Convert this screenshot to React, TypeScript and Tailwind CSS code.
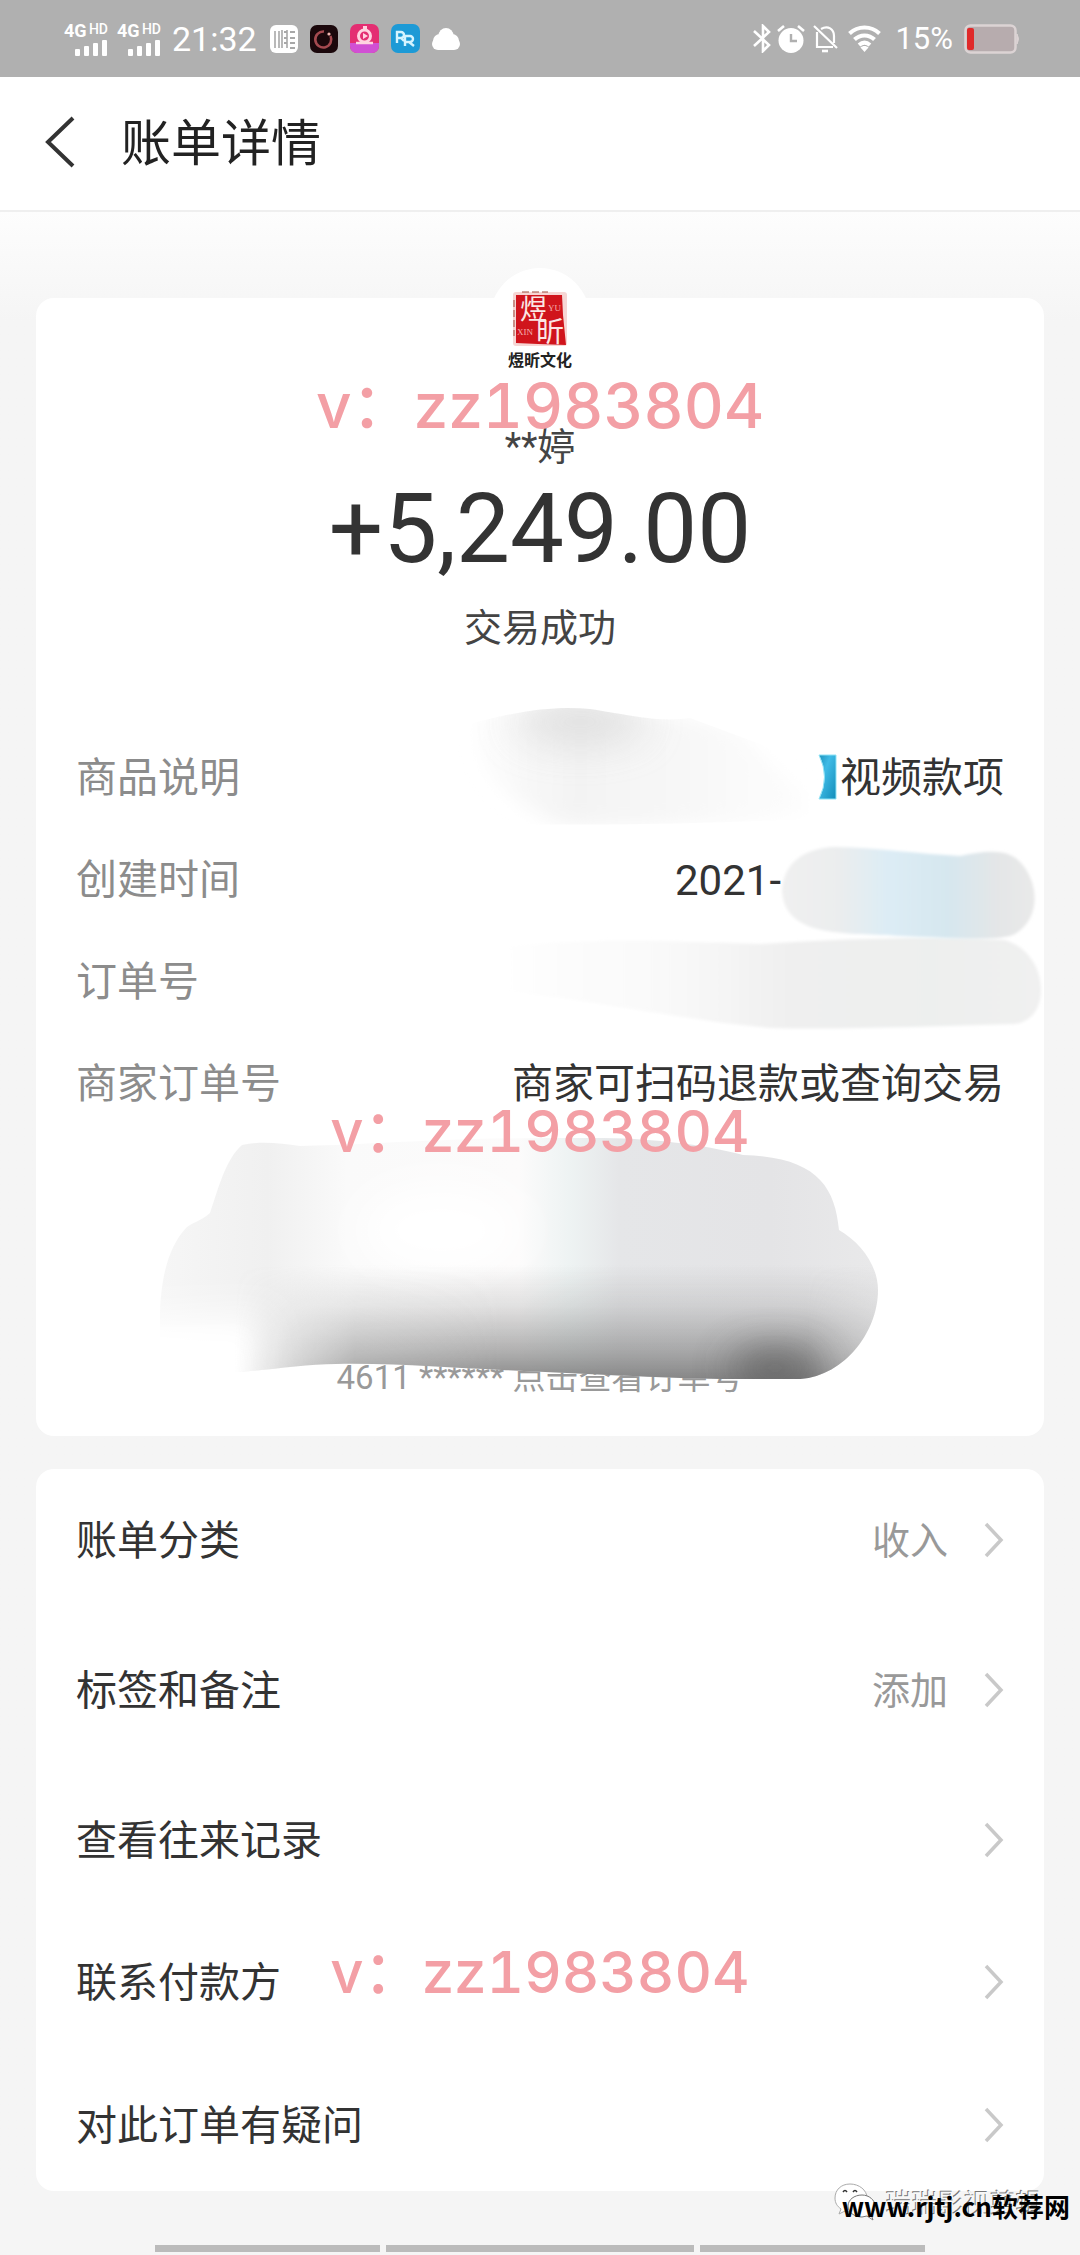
import React from 'react';

const FONT = "font-['Roboto','Noto_Sans_CJK_SC',sans-serif]";
const CJK = "font-['Noto_Sans_CJK_SC',sans-serif]";

function Signal() {
  return (
    <div className="flex h-[34px] w-[44px] flex-col items-end">
      <div className="flex w-full items-start justify-between">
        <span className="text-[18px] font-bold leading-[18px]">4G</span>
        <span className="text-[14px] font-medium leading-[14px]">HD</span>
      </div>
      <svg className="h-[16px] w-[33px]" viewBox="0 0 33 16" fill="currentColor" aria-hidden="true">
        <rect x="0" y="9" width="5" height="7" rx="1" />
        <rect x="9" y="6" width="5" height="10" rx="1" />
        <rect x="18" y="3" width="5" height="13" rx="1" />
        <rect x="27" y="0" width="5" height="16" rx="1" />
      </svg>
    </div>
  );
}

function StatusBar() {
  return (
    <div className="flex h-[77px] items-center justify-between bg-[#b0b0b0] pl-[64px] pr-[60px] text-white">
      <div className="flex items-center">
        <Signal />
        <div className="w-[9px]" />
        <Signal />
        <span className="ml-[11px] text-[34px] leading-[40px]">21:32</span>
        <div className="ml-[13px] flex items-center gap-[12px]">
          <svg className="size-[28px]" viewBox="0 0 28 28" aria-hidden="true">
            <rect width="28" height="28" rx="6" fill="#fff" />
            <path d="M5 6v17M9 6v17M12 5v18M17 5v18" stroke="#a8a8a8" strokeWidth="1.6" />
            <path d="M14 7h3M14 13h3M14 18h3M20 7h5M20 13h5M20 18h5M20 23h5" stroke="#a8a8a8" strokeWidth="1.8" />
          </svg>
          <svg className="size-[28px]" viewBox="0 0 28 28" aria-hidden="true">
            <rect width="28" height="28" rx="7" fill="#1b080c" />
            <path d="M20.5 11A8 8 0 1 1 14 6.5" fill="none" stroke="#a54a50" strokeWidth="2.6" />
            <circle cx="19" cy="9" r="1.6" fill="#f3b9b2" />
          </svg>
          <svg className="size-[29px]" viewBox="0 0 29 29" aria-hidden="true">
            <rect width="29" height="29" rx="7" fill="#e42e72" />
            <path d="M0 19h29v3a7 7 0 0 1-7 7H7a7 7 0 0 1-7-7z" fill="#d150d4" />
            <circle cx="14.5" cy="12" r="6" fill="none" stroke="#ffd3e0" strokeWidth="3" />
            <path d="M13 9l5 3-5 3zM13 2h4v3h-4z" fill="#ffd3e0" />
            <path d="M6 19h17" stroke="#ffd3e0" strokeWidth="2.5" />
          </svg>
          <svg className="size-[29px]" viewBox="0 0 29 29" aria-hidden="true">
            <rect width="29" height="29" rx="7" fill="#1d9ad6" />
            <path d="M6 19V8h4a3 3 0 0 1 0 6H6m4 0l3 3M14 22V12h5a3 3 0 0 1 0 6h-5m4 0l5 4" fill="none" stroke="#d5f4ff" strokeWidth="2.4" />
          </svg>
          <svg className="h-[24px] w-[28px]" viewBox="0 0 28 24" fill="#fff" aria-hidden="true">
            <circle cx="14" cy="8.5" r="7.5" />
            <rect x="0" y="11" width="28" height="12" rx="6" />
            <circle cx="20" cy="14" r="7" />
            <circle cx="8" cy="14" r="7" />
          </svg>
        </div>
      </div>
      <div className="flex items-center">
        <svg className="h-[29px] w-[18px]" viewBox="0 0 18 29" fill="none" stroke="#fff" strokeWidth="2.6" aria-hidden="true">
          <path d="M1 7l15 14-6 6V2l6 6L1 22" />
        </svg>
        <svg className="ml-[6px] h-[30px] w-[28px]" viewBox="0 0 28 30" aria-hidden="true">
          <circle cx="14" cy="16.5" r="12.5" fill="#fff" />
          <path d="M1 7l6-5M27 7l-6-5" stroke="#fff" strokeWidth="2.6" />
          <path d="M14 10v7h6" fill="none" stroke="#b0b0b0" strokeWidth="2.4" />
        </svg>
        <svg className="ml-[8px] h-[29px] w-[25px]" viewBox="0 0 25 29" fill="none" stroke="#fff" strokeWidth="2.2" aria-hidden="true">
          <path d="M1 2l23 22M4 8v15h16M8 5c7-4 13 0 13 7v7" />
          <path d="M9 27h6" strokeWidth="2.6" />
        </svg>
        <svg className="ml-[10px] h-[27px] w-[33px]" viewBox="0 0 33 27" fill="none" stroke="#fff" strokeWidth="4" aria-hidden="true">
          <path d="M1.500 8.500c8.500-8 21.500-8 30 0M6.500 14.500c5.500-5.500 14.500-5.500 20 0M11 20c3.500-3 7.500-3 11 0" />
          <path d="M16.500 27l-4-4.500c2-2 6-2 8 0z" fill="#fff" stroke="none" />
        </svg>
        <span className="ml-[14px] text-[31px] leading-[40px]">15%</span>
        <svg className="ml-[11px] h-[30px] w-[56px]" viewBox="0 0 56 30" aria-hidden="true">
          <rect x="1.500" y="1.500" width="50" height="27" rx="5" fill="#b7acae" stroke="#dcd3d4" strokeWidth="2.500" />
          <rect x="3" y="4" width="7" height="22" rx="2" fill="#e02a2a" />
          <path d="M53 10q3 5 0 10z" fill="#dcd3d4" stroke="#dcd3d4" />
        </svg>
      </div>
    </div>
  );
}

function Watermark({ className }: { className: string }) {
  return (
    <p className={`pointer-events-none absolute inset-x-0 text-center font-['Inter','Noto_Sans_CJK_SC',sans-serif] font-medium leading-[60px] tabular-nums text-[#f39fa5] ${className}`}>
      v：zz1983804
    </p>
  );
}

function Seal() {
  return (
    <div className="relative z-10 flex size-[100px] flex-col items-center rounded-full bg-white pt-[22px]">
      <svg className="h-[58px] w-[56px] shrink-0 overflow-visible" viewBox="0 0 56 58" role="img" aria-label="煜昕">
        <rect x="1" y="2" width="54" height="54" rx="3" fill="#f6d6d4" />
        <path d="M4 5h46l1 20 3 30-28-1-22-1z" fill="#d0141c" />
        <path d="M2 10v36M10 2h26" stroke="#9d4a3c" strokeWidth="1" strokeDasharray="7 3" fill="none" />
        <text x="8" y="29" fontSize="27" fill="#fbe6e4" className={CJK}>煜</text>
        <text x="24" y="52" fontSize="28" fill="#fbe6e4" className={CJK}>昕</text>
        <text x="36" y="21" fontSize="9" fill="#f3b0ae" fontFamily="Liberation Serif">YU</text>
        <text x="5" y="45" fontSize="9" fill="#f3b0ae" fontFamily="Liberation Serif">XIN</text>
      </svg>
      <span className={`${CJK} mt-[2px] whitespace-nowrap text-[16px] font-bold leading-[18px] text-[#222]`}>煜昕文化</span>
    </div>
  );
}

/* Brushed-over private details; coordinates span the summary card. */
function Smears() {
  return (
    <svg className="pointer-events-none absolute inset-0 h-full w-full" viewBox="36 298 1008 1138" preserveAspectRatio="none" aria-hidden="true">
      <defs>
        <filter id="b6" x="-30%" y="-30%" width="160%" height="160%"><feGaussianBlur stdDeviation="9" /></filter>
        <filter id="b2" x="-30%" y="-30%" width="160%" height="160%"><feGaussianBlur stdDeviation="1.500" /></filter>
        <filter id="b22" filterUnits="userSpaceOnUse" x="36" y="298" width="1008" height="1138"><feGaussianBlur stdDeviation="20" /></filter>
        <linearGradient id="item" x1="450" x2="810" y1="0" y2="0" gradientUnits="userSpaceOnUse">
          <stop offset="0" stopColor="#fff" />
          <stop offset=".35" stopColor="#f3f3f3" />
          <stop offset=".75" stopColor="#f9f9f9" />
          <stop offset="1" stopColor="#fdfdfd" />
        </linearGradient>
        <linearGradient id="date" x1="782" x2="1036" y1="0" y2="0" gradientUnits="userSpaceOnUse">
          <stop offset="0" stopColor="#f0f0f0" />
          <stop offset=".22" stopColor="#ebedee" />
          <stop offset=".42" stopColor="#dcecf5" />
          <stop offset=".65" stopColor="#d6e7ef" />
          <stop offset=".85" stopColor="#e4e6e7" />
          <stop offset="1" stopColor="#e9e9e9" />
        </linearGradient>
        <linearGradient id="order" x1="490" x2="1041" y1="0" y2="0" gradientUnits="userSpaceOnUse">
          <stop offset="0" stopColor="#fff" />
          <stop offset=".35" stopColor="#f8f8f8" />
          <stop offset=".55" stopColor="#efefef" />
          <stop offset=".8" stopColor="#edefee" />
          <stop offset="1" stopColor="#f0f0f0" />
        </linearGradient>
        <linearGradient id="cloud" x1="160" x2="878" y1="0" y2="0" gradientUnits="userSpaceOnUse">
          <stop offset="0" stopColor="#f6f6f6" />
          <stop offset=".15" stopColor="#f0f0f0" />
          <stop offset=".26" stopColor="#fafafa" />
          <stop offset=".5" stopColor="#fcfbfb" />
          <stop offset=".57" stopColor="#eef3f3" />
          <stop offset=".64" stopColor="#e5e6e8" />
          <stop offset=".85" stopColor="#e4e4e6" />
          <stop offset="1" stopColor="#e9e9ea" />
        </linearGradient>
        <linearGradient id="shade" x1="0" x2="0" y1="1265" y2="1378" gradientUnits="userSpaceOnUse">
          <stop offset="0" stopColor="#888" stopOpacity="0" />
          <stop offset=".35" stopColor="#888" stopOpacity=".22" />
          <stop offset=".75" stopColor="#808080" stopOpacity=".6" />
          <stop offset="1" stopColor="#777" stopOpacity=".85" />
        </linearGradient>
        <linearGradient id="fade" x1="235" x2="900" y1="0" y2="0" gradientUnits="userSpaceOnUse">
          <stop offset="0" stopColor="#000" />
          <stop offset=".06" stopColor="#333" />
          <stop offset=".18" stopColor="#ccc" />
          <stop offset=".4" stopColor="#fff" />
          <stop offset=".86" stopColor="#fff" />
          <stop offset="1" stopColor="#555" />
        </linearGradient>
        <mask id="shadeMask" maskUnits="userSpaceOnUse" x="100" y="1200" width="820" height="200">
          <rect x="100" y="1200" width="820" height="200" fill="url(#fade)" />
        </mask>
        <clipPath id="cloudClip">
          <path d="M242 1145C225 1160 218 1190 210 1213C200 1222 192 1222 186 1228C170 1245 160 1275 160 1320V1372H239C270 1370 305 1364 336 1364C400 1363 450 1368 502 1370C590 1374 680 1379 732 1379H795C840 1380 878 1335 878 1290C878 1265 860 1242 839 1230C835 1185 815 1157 743 1155C700 1143 640 1137 580 1138C450 1137 350 1146 300 1146C280 1143 260 1141 242 1145Z" />
        </clipPath>
        <clipPath id="itemClip">
          <path d="M420 740C500 712 550 705 590 709C640 717 660 722 690 718L830 770V818C740 822 600 828 440 822Z" />
        </clipPath>
      </defs>

      <g clipPath="url(#itemClip)">
        <path d="M480 718C540 700 600 700 640 712C700 720 735 720 755 750L805 795V813C740 824 640 828 560 824C500 800 470 760 480 718Z" fill="url(#item)" filter="url(#b6)" />
        <ellipse cx="580" cy="722" rx="65" ry="20" fill="#d6d6d6" opacity=".75" filter="url(#b22)" />
      </g>

      <path d="M490 948C600 936 680 942 760 944C850 938 940 936 1005 940C1030 948 1041 970 1041 990C1041 1010 1030 1022 1015 1024C930 1026 840 1030 770 1028C680 1020 600 1000 490 990Z" fill="url(#order)" filter="url(#b2)" />
      <path d="M782 890C784 862 805 848 835 847C880 848 920 854 960 856C990 850 1012 848 1025 868C1040 890 1038 920 1015 934C1000 942 950 938 900 936C850 932 784 940 782 890Z" fill="url(#date)" filter="url(#b2)" />

      <g clipPath="url(#cloudClip)">
        <rect x="150" y="1130" width="740" height="260" fill="url(#cloud)" />
        <ellipse cx="440" cy="1230" rx="80" ry="45" fill="#fff" filter="url(#b22)" />
        <rect x="40" y="1318" width="230" height="110" fill="#fff" filter="url(#b22)" />
        <rect x="40" y="1335" width="205" height="90" fill="#fff" filter="url(#b6)" />
        <rect x="150" y="1260" width="740" height="130" fill="url(#shade)" mask="url(#shadeMask)" />
        <ellipse cx="775" cy="1368" rx="45" ry="18" fill="#444" opacity=".7" filter="url(#b22)" />
      </g>
    </svg>
  );
}

function Detail({ label, children }: { label: string; children?: React.ReactNode }) {
  return (
    <div className={`${CJK} flex h-[102px] items-center justify-between text-[41px] leading-[60px]`}>
      <dt className="pb-[6px] text-[#8c8c8c]">{label}</dt>
      <dd className="flex items-center text-[#333]">{children}</dd>
    </div>
  );
}

function LinkRow({ label, value }: { label: string; value?: string }) {
  return (
    <button type="button" className="flex h-[60px] w-full items-center justify-between">
      <span className="pb-[6px] text-[41px] leading-[60px] text-[#333]">{label}</span>
      <span className="flex items-center gap-[34px] text-[38px] leading-[60px] text-[#999]">
        {value && <span className="pb-[4px]">{value}</span>}
        <svg className="h-[36px] w-[22px]" viewBox="0 0 22 36" fill="none" stroke="#c9c9c9" strokeWidth="3.500" aria-hidden="true">
          <path d="M4 2l15 16L4 34" />
        </svg>
      </span>
    </button>
  );
}

export default function App() {
  return (
    <div className={`${FONT} bg-[#f5f5f5]`}>
      <StatusBar />
      <header className="flex h-[135px] items-center border-b-2 border-[#efefef] bg-white pb-[4px] pl-[43px]">
        <button type="button" aria-label="返回" className="flex h-[60px] w-[36px] items-center">
          <svg className="h-[52px] w-[32px]" viewBox="0 0 32 52" fill="none" stroke="#333" strokeWidth="4" aria-hidden="true">
            <path d="M30 2L5 26l25 24" />
          </svg>
        </button>
        <h1 className={`${CJK} ml-[42px] pb-[6px] text-[50px] leading-[70px] text-[#222]`}>账单详情</h1>
      </header>

      <main className="bg-linear-to-b from-[#fdfdfd] to-[#f5f5f5] to-[110px] px-[36px] pt-[86px]">
        <section className="relative flex flex-col items-center rounded-[18px] bg-white pb-[33px]">
          <div className="-mt-[30px]">
            <Seal />
          </div>
          <p className="mt-[54px] text-[38px] leading-[50px] text-[#444]">**婷</p>
          <p className="mt-[2px] text-[96px] leading-[110px] text-[#333]">+5,249.00</p>
          <p className={`${CJK} mt-[11px] text-[38px] leading-[60px] text-[#444]`}>交易成功</p>
          <dl className="mt-[71px] w-full px-[40px]">
            <Detail label="商品说明">
              <svg className="h-[46px] w-[22px]" viewBox="0 0 22 46" aria-hidden="true">
                <defs>
                  <linearGradient id="bracket" x1="0" x2="1" y1="0" y2="1">
                    <stop offset="0" stopColor="#1e93bd" />
                    <stop offset=".35" stopColor="#3fbbe6" />
                    <stop offset="1" stopColor="#128dba" />
                  </linearGradient>
                </defs>
                <path d="M1 1Q12 23 1 45H18V1z" fill="url(#bracket)" stroke="#8fe3f6" strokeWidth="1" />
              </svg>
              <span className="pb-[6px]">视频款项</span>
            </Detail>
            <Detail label="创建时间">
              <span className={`${FONT} pt-[4px] text-[42px]`}>2021-</span>
              <span className="w-[223px]" />
            </Detail>
            <Detail label="订单号" />
            <Detail label="商家订单号">
              <span className="pb-[6px]">商家可扫码退款或查询交易</span>
            </Detail>
          </dl>
          <p className="mt-[219px] text-[33px] leading-[50px] text-[#999]">4611 ****** 点击查看订单号</p>
          <Smears />
          <Watermark className="top-[78px] text-[62px]" />
          <Watermark className="top-[803px] text-[58px]" />
        </section>

        <section className={`${CJK} relative mt-[33px] flex flex-col rounded-[18px] bg-white px-[40px] pb-[36px] pt-[41px]`}>
          <div className="flex flex-col gap-[90px]">
            <LinkRow label="账单分类" value="收入" />
            <LinkRow label="标签和备注" value="添加" />
            <LinkRow label="查看往来记录" />
          </div>
          <div className="mt-[82px] flex flex-col gap-[83px]">
            <LinkRow label="联系付款方" />
            <LinkRow label="对此订单有疑问" />
          </div>
          <Watermark className="top-[473px] text-[58px]" />
        </section>
      </main>

      <footer className="relative flex h-[64px] items-end justify-center pb-[3px]">
        <div className="flex w-full gap-[6px] px-[155px]">
          <div className="h-[7px] flex-[225] bg-[#bbb]" />
          <div className="h-[7px] flex-[308] bg-[#bbb]" />
          <div className="h-[7px] flex-[225] bg-[#bbb]" />
        </div>
        <div className="absolute right-[38px] top-[-8px] flex items-center gap-[10px]">
          <svg className="h-[38px] w-[42px]" viewBox="0 0 42 38" fill="#fff" stroke="#777" strokeWidth="1" aria-hidden="true">
            <path d="M16 1C7 1 1 7 1 15c0 5 2 8 6 11l-2 5 6-3c10 3 22-2 22-13C33 7 25 1 16 1z" stroke="#aaa" />
            <path d="M28 12c-8 0-14 5-14 11s6 11 14 11l5-1 6 4-2-6c3-2 4-5 4-8 0-6-6-11-13-11z" />
            <path d="M9 9q2-3 4 0M19 9q2-3 4 0" fill="none" stroke="#333" strokeWidth="1.500" />
          </svg>
          <span className={`${CJK} text-[26px] leading-[38px] text-[#f8f8f8] [text-shadow:-1px_-1px_0_#777]`}>瑞瑞影视剪辑</span>
        </div>
        <a href="#site" className="absolute right-[10px] top-[-2px] font-['Noto_Sans_CJK_SC',sans-serif] text-[26px] font-bold leading-[34px] text-black">
          www.rjtj.cn软荐网
        </a>
      </footer>
    </div>
  );
}
